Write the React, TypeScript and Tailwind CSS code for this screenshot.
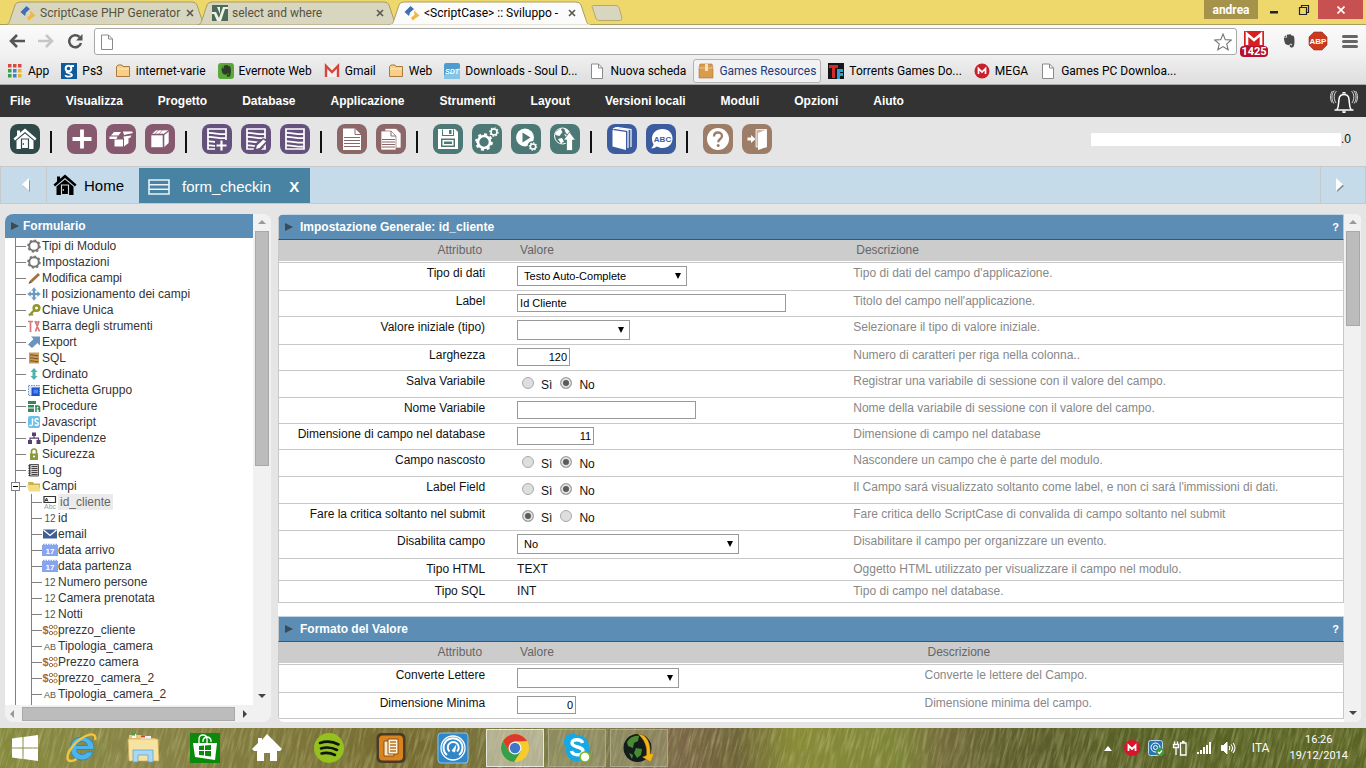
import React, { useState } from "react";
import type { ReactNode } from "react";

const chromeFont = "font-['Roboto','Open_Sans',sans-serif]";
const appFont = "font-['Liberation_Sans',Arial,sans-serif]";

/* ---------- small shared drawings ---------- */

function ScriptCaseMark() {
  return (
    <svg viewBox="0 0 16 16" className="size-4 shrink-0" aria-hidden="true">
      <path d="M6.500 1 10 4 6 7.500 5 11 .5 7Z" fill="#3c6fb4" />
      <path d="M10 5.500 15.500 10.500 8.500 15.500 7 12.500 10.500 10Z" fill="#f4b73c" />
    </svg>
  );
}

function SelectMark() {
  return (
    <svg viewBox="0 0 16 16" className="size-4 shrink-0" aria-hidden="true">
      <path d="M0 0h16v16H0z" fill="#4c6b5c" />
      <path d="M0 7h4l3 6 4-11h5v2h-3L9 16H5L2 9H0zM5 2h3v7z" fill="#f1f1e0" />
    </svg>
  );
}

function PageIcon() {
  return (
    <svg viewBox="0 0 16 16" className="size-4 shrink-0" aria-hidden="true">
      <path d="M2.500 1h7l4 4v10.500h-11z" fill="#fff" stroke="#8a8a8a" />
      <path d="M9.500 1v4h4" fill="none" stroke="#8a8a8a" />
    </svg>
  );
}

function FolderIcon() {
  return (
    <svg viewBox="0 0 16 16" className="size-4 shrink-0" aria-hidden="true">
      <path d="M1.500 3.500 3 2h4l1 1.500h6.500v10h-13z" fill="#f9cf87" stroke="#a87a3c" />
      <path d="M2 6h12" stroke="#fde8bd" />
    </svg>
  );
}

function Elephant({ color }: { color: string }) {
  return (
    <path
      d="M6 2.500 9.500 2l.8 1.100 2 .5c.9 3.200.8 7.500-.2 9.300-.7 1.300-3.100 1.300-3.400-.2-.2-1 .5-1.700 1.500-1.500v1.100c.8-.2.9-1.700-.3-1.800-1-.1-1.500.5-1.600 1.200-2-.1-3.600-.6-4-2.200C3.800 8 3.500 6.400 3.400 5.200H6zM5.300 2.800 3.500 4.600h1.800z"
      fill={color}
    />
  );
}

/* ---------- browser ---------- */

function TabShape({ active }: { active?: boolean }) {
  return (
    <svg viewBox="0 0 202 24" preserveAspectRatio="none" className="absolute inset-0 size-full" aria-hidden="true">
      <path
        d="M0 24C5 23 4 21 6 16L10 4Q11 1 15 1H187Q191 1 192 4L196 16C198 21 197 23 202 24Z"
        fill={active ? "#fbfbfb" : "#d9d6c0"}
        stroke="#a99d62"
        strokeWidth="1"
      />
      {active && <path d="M1 23.500h200v1H1z" fill="#fbfbfb" />}
    </svg>
  );
}

function BrowserTab({ icon, title, active }: { icon: ReactNode; title: string; active?: boolean }) {
  return (
    <div className={active ? "relative z-10 h-6 w-[202px] -mr-2.5" : "relative h-6 w-[202px] -mr-2.5"}>
      <TabShape active={active} />
      <div className="relative flex h-full items-center gap-1 pl-[15px] pr-3">
        {icon}
        <span className={active ? "whitespace-nowrap text-[12px] text-black" : "whitespace-nowrap text-[12px] text-[#55533f]"}>
          {title}
        </span>
        <button aria-label={"Chiudi " + title} className="ml-auto flex size-3.5 items-center justify-center">
          <svg viewBox="0 0 8 8" className="size-2" aria-hidden="true">
            <path d="m1 1 6 6M7 1 1 7" stroke="#5a5a50" strokeWidth="1.700" />
          </svg>
        </button>
      </div>
    </div>
  );
}

function TabStrip() {
  return (
    <header className="flex h-[25px] shrink-0 items-start border-b border-[#a99d62] bg-[#efd86b] pl-[5px]">
      <div className="flex pt-px">
        <BrowserTab icon={<ScriptCaseMark />} title="ScriptCase PHP Generator" />
        <BrowserTab icon={<SelectMark />} title="select and where" />
        <BrowserTab icon={<ScriptCaseMark />} title="<ScriptCase> :: Sviluppo -" active />
        <button aria-label="Nuova scheda" className="ml-2.5 mt-1 h-4 w-8">
          <svg viewBox="0 0 32 16" className="h-4 w-8" aria-hidden="true">
            <path d="M1 1.500Q1 .5 3 .5H25Q27 .5 28 2.500L31 13Q31 15.500 29 15.500H8Q6 15.500 5 13.500Z" fill="#d9d6c0" stroke="#b3a86e" />
          </svg>
        </button>
      </div>
      <div className="ml-auto flex items-start pr-[3px]">
        <button className="h-[19px] w-[54px] bg-[#a5934b] text-[12px] font-bold leading-[18px] text-white">andrea</button>
        <button aria-label="Riduci" className="flex h-[19px] w-8 items-center justify-center">
          <svg viewBox="0 0 10 10" className="size-2.5" aria-hidden="true"><path d="M1 6h8v2.500H1z" fill="#222" /></svg>
        </button>
        <button aria-label="Ripristina" className="flex h-[19px] w-7 items-center justify-center">
          <svg viewBox="0 0 12 12" className="size-3" aria-hidden="true">
            <path d="M1.500 3.500h7v7h-7zM3.500 3V1.500h7v7H9" fill="none" stroke="#222" strokeWidth="1.200" />
          </svg>
        </button>
        <button aria-label="Chiudi" className="flex h-[19px] w-[45px] items-center justify-center bg-[#c75050]">
          <svg viewBox="0 0 8 8" className="size-2" aria-hidden="true"><path d="m.5.5 7 7m0-7-7 7" stroke="#fff" strokeWidth="1.600" /></svg>
        </button>
      </div>
    </header>
  );
}

function AddressBar() {
  return (
    <div className="flex h-8 shrink-0 items-center bg-linear-to-b from-[#fbfbfb] to-[#f0f0f0] pl-2 pr-2">
      <button aria-label="Indietro" className="flex w-[29px] justify-start">
        <svg viewBox="0 0 18 16" className="h-4 w-[18px]" aria-hidden="true"><path d="M9 2 3 8l6 6M3 8h14" fill="none" stroke="#555" strokeWidth="2.600" /></svg>
      </button>
      <button aria-label="Avanti" className="flex w-[29px] justify-start">
        <svg viewBox="0 0 18 16" className="h-4 w-[18px]" aria-hidden="true"><path d="m9 2 6 6-6 6M15 8H1" fill="none" stroke="#c6c6c6" strokeWidth="2.600" /></svg>
      </button>
      <button aria-label="Ricarica" className="flex w-7 justify-start">
        <svg viewBox="0 0 18 16" className="h-4 w-[18px]" aria-hidden="true">
          <path d="M13.500 4A6 6 0 1 0 15 10" fill="none" stroke="#555" strokeWidth="2.500" />
          <path d="M16.500 1v6.500H10z" fill="#555" />
        </svg>
      </button>
      <div className="mt-px flex h-[27px] flex-1 items-center rounded-[3px] border border-[#a8a8a8] bg-white px-1">
        <PageIcon />
        <input aria-label="Indirizzo" className="h-5 min-w-0 flex-1 bg-transparent px-2 text-[13px] outline-none" defaultValue="" />
        <button aria-label="Preferiti">
          <svg viewBox="0 0 18 18" className="size-[18px]" aria-hidden="true">
            <path d="m9 1 2.300 5.600 6 .4-4.600 3.900 1.500 5.900L9 13.600l-5.200 3.200 1.500-5.900L.7 7l6-.4z" fill="#fff" stroke="#777" strokeWidth="1.100" />
          </svg>
        </button>
      </div>
      <button aria-label="Gmail, 1425 messaggi" className="relative ml-[3px] flex h-7 w-7 justify-center">
        <svg viewBox="0 0 20 16" className="mt-1 h-4 w-5" aria-hidden="true">
          <path d="M0 0h20v16H0z" fill="#d81e1e" />
          <path d="M3 14V3l7 6 7-6v11" fill="none" stroke="#fff" strokeWidth="2.600" />
        </svg>
        <span className="absolute bottom-[-2px] left-0 w-7 rounded-sm bg-[#b5102d] text-center text-[11px] font-bold leading-[11px] text-white">1425</span>
      </button>
      <button aria-label="Evernote" className="ml-3 w-4">
        <svg viewBox="0 0 16 16" className="size-[18px]" aria-hidden="true"><Elephant color="#4b4b4b" /></svg>
      </button>
      <button aria-label="Adblock Plus" className="ml-3 flex size-[20px] items-center justify-center">
        <svg viewBox="0 0 20 20" className="size-5" aria-hidden="true">
          <path d="M6 1h8l5 5v8l-5 5H6l-5-5V6z" fill="#c93a1f" stroke="#8e2b1a" strokeWidth=".6" />
          <text x="10" y="13" fontSize="8" fontWeight="700" textAnchor="middle" fill="#fff" fontFamily="Liberation Sans">ABP</text>
        </svg>
      </button>
      <button aria-label="Menu" className="ml-3.5 flex h-4 w-4 flex-col justify-center gap-0.5">
        <span className="h-[3px] w-full rounded-sm bg-[#666]" />
        <span className="h-[3px] w-full rounded-sm bg-[#666]" />
        <span className="h-[3px] w-full rounded-sm bg-[#666]" />
      </button>
    </div>
  );
}

const appDots = ["#d8483e", "#d8483e", "#d8483e", "#3f9a52", "#4180d0", "#e8b42c", "#3f9a52", "#4180d0", "#e8b42c"];

const bookmarks: { label: string; icon: ReactNode; hot?: boolean }[] = [
  {
    label: "App",
    icon: (
      <svg viewBox="0 0 16 16" className="size-4 shrink-0" aria-hidden="true">
        {appDots.map((c, i) => (
          <rect key={i} x={1 + (i % 3) * 5} y={1 + Math.floor(i / 3) * 5} width="3.500" height="3.500" fill={c} />
        ))}
      </svg>
    ),
  },
  {
    label: "Ps3",
    icon: (
      <svg viewBox="0 0 16 16" className="size-4 shrink-0" aria-hidden="true">
        <path d="M0 0h16v16H0z" fill="#0d5c9e" />
        <circle cx="7.500" cy="5.500" r="2.800" fill="none" stroke="#fff" strokeWidth="2" />
        <path d="M10 3h3M6 8.500c-2 1.500 5 1.500 5 3.500S4.500 14.500 4.500 12" fill="none" stroke="#fff" strokeWidth="1.800" />
      </svg>
    ),
  },
  { label: "internet-varie", icon: <FolderIcon /> },
  {
    label: "Evernote Web",
    icon: (
      <svg viewBox="0 0 16 16" className="size-4 shrink-0" aria-hidden="true">
        <rect width="16" height="16" rx="3" fill="#5aa83a" />
        <Elephant color="#2d3b28" />
      </svg>
    ),
  },
  {
    label: "Gmail",
    icon: (
      <svg viewBox="0 0 16 16" className="size-4 shrink-0" aria-hidden="true">
        <path d="M1 3h14v11H1z" fill="#f2f0ee" />
        <path d="M2 14V3l6 6 6-6v11" fill="none" stroke="#d5473c" strokeWidth="2.400" />
      </svg>
    ),
  },
  { label: "Web", icon: <FolderIcon /> },
  {
    label: "Downloads - Soul D...",
    icon: (
      <svg viewBox="0 0 16 16" className="size-4 shrink-0" aria-hidden="true">
        <rect width="16" height="16" rx="2" fill="#4d9bcf" />
        <path d="M0 12 16 5v11H0z" fill="#86c4e6" />
        <text x="8" y="11" fontSize="7" fontWeight="700" fontStyle="italic" textAnchor="middle" fill="#fff" fontFamily="Liberation Sans">SDT</text>
      </svg>
    ),
  },
  { label: "Nuova scheda", icon: <PageIcon /> },
  {
    label: "Games Resources",
    hot: true,
    icon: (
      <svg viewBox="0 0 16 16" className="size-4 shrink-0" aria-hidden="true">
        <path d="M2 1h12l1 4v10H1V5z" fill="#d99b4e" stroke="#a8743a" strokeWidth=".6" />
        <path d="M1 5h14" stroke="#f0c68a" />
        <path d="M7 1h3v7H7z" fill="#f6e2bd" />
      </svg>
    ),
  },
  {
    label: "Torrents Games Do...",
    icon: (
      <svg viewBox="0 0 16 16" className="size-4 shrink-0" aria-hidden="true">
        <path d="M0 0h16v16H0z" fill="#161616" />
        <path d="M1 2h9v3H7v10H4V5H1z" fill="#d62a2a" />
        <path d="M9 6h6v3h-3v1h3v3h-3v3H9z" fill="#2b9fd8" />
      </svg>
    ),
  },
  {
    label: "MEGA",
    icon: (
      <svg viewBox="0 0 16 16" className="size-4 shrink-0" aria-hidden="true">
        <circle cx="8" cy="8" r="7.500" fill="#c8202c" />
        <path d="M4.500 11V5.500L8 9l3.500-3.500V11" fill="none" stroke="#fff" strokeWidth="1.700" />
      </svg>
    ),
  },
  { label: "Games PC Downloa...", icon: <PageIcon /> },
];

function BookmarksBar() {
  return (
    <nav aria-label="Preferiti" className="flex h-7 shrink-0 items-center gap-0.5 border-b border-[#a9a9a9] bg-linear-to-b from-[#efefef] to-[#dedede] pl-0.5">
      {bookmarks.map((b) => (
        <a
          key={b.label}
          href="#"
          className={
            b.hot
              ? "flex h-6 items-center gap-[5px] whitespace-nowrap rounded-[3px] border border-[#b3b3b3] bg-[#f2f2f2] px-1 text-[12px] text-[#223a7a]"
              : "flex h-6 items-center gap-[5px] whitespace-nowrap border border-transparent px-1 text-[12px] text-black"
          }
        >
          {b.icon}
          {b.label}
        </a>
      ))}
    </nav>
  );
}

/* ---------- application header ---------- */

const menu = ["File", "Visualizza", "Progetto", "Database", "Applicazione", "Strumenti", "Layout", "Versioni locali", "Moduli", "Opzioni", "Aiuto"];

function MenuBar() {
  return (
    <nav aria-label="Menu principale" className="flex h-8 shrink-0 items-center gap-[35px] bg-[#333] pl-2.5 pr-2">
      {menu.map((m) => (
        <button key={m} className="whitespace-nowrap text-[12px] font-bold text-white">{m}</button>
      ))}
      <button aria-label="Notifiche" className="ml-auto">
        <svg viewBox="0 0 28 26" className="h-[26px] w-7" fill="none" stroke="#fff" aria-hidden="true">
          <path d="M4.500 22h19M7 21.500C9.500 18 8 13 9.500 9 11 5.500 17 5.500 18.500 9c1.500 4 0 9 2.500 12.500" strokeWidth="1.500" />
          <path d="M13 6V4.500h2V6M13 23h2v1.500h-2z" strokeWidth="1.100" />
          <path d="M6.500 3C3.500 6 3.500 11 6 15M4.300 2.500C1 6.500 1.500 11.500 3.800 15.500M2.300 3C-.2 7 .2 11 1.800 14.500M21.500 3c3 3 3 8 .5 12M23.700 2.500c3.300 4 2.800 9 .5 13M25.700 3c2.500 4 2.100 8 .5 11.500" strokeWidth=".8" />
        </svg>
      </button>
    </nav>
  );
}

const w = { fill: "none", stroke: "#fff" };

function Gear({ x, y, r, sw }: { x: number; y: number; r: number; sw: number }) {
  return (
    <g>
      <circle cx={x} cy={y} r={r} fill="none" stroke="#fff" strokeWidth={sw} />
      <circle cx={x} cy={y} r={r + sw * 0.7} fill="none" stroke="#fff" strokeWidth={sw * 0.8} pathLength={16} strokeDasharray="1 1" />
    </g>
  );
}

const house = (
  <>
    <path d="M15 4.500 26.500 14.500 25 16.500 15 8 5 16.500 3.500 14.500 7 11.400V6.500h3v2.300z" fill="currentColor" />
    <path d="M15 9.500 23.500 16.500V25h-17V16.500z" fill="currentColor" />
    <path d="M11.500 24.500V15h7v9.500z" className="fill-none stroke-(--door)" strokeWidth="1.200" />
    <path d="M13.300 19v2" className="fill-none stroke-(--door)" strokeWidth="1" />
  </>
);

const db = (
  <path d="M6 5h18v20H6zM6 9c6-.5 12 2 18 1M6 13c6-.5 12 2 18 1M6 17.500c6-.5 12 2 18 1M6 21.500c6-.5 12 2 18 1" {...w} strokeWidth="1.700" />
);

const tools: { name: string; bg: string; art: ReactNode }[][] = [
  [{ name: "Home", bg: "bg-[#2f4a48] text-white [--door:#2f4a48]", art: house }],
  [
    { name: "Nuovo", bg: "bg-[#87596f]", art: <path d="M15 5.500v19M5.500 15h19" {...w} strokeWidth="3.800" /> },
    {
      name: "Apri progetto",
      bg: "bg-[#87596f]",
      art: (
        <g fill="#fff">
          <path d="M8.500 15.500h8.500v7H8.500zM18 15.500l4.500-2.500v6L18 22.500zM8 8h7l-2.500 3.500H5zM17 7.500h9l1 1.500-9 2zM3.500 12.500h8l-1 2.500h-7zM17.500 12.500l8-1-1.500 2.500-6 1z" />
        </g>
      ),
    },
    { name: "Chiudi progetto", bg: "bg-[#87596f]", art: <path d="M6 11h12v12.500H6zM6.500 10 11 6h13l-5 4zM19 11l5-4v12l-5 4.500zM14 5.500l-4.500 5M18 5.500l-4.500 5" fill="#fff" stroke="#87596f" strokeWidth=".6" /> },
  ],
  [
    { name: "Nuova tabella", bg: "bg-[#65527c]", art: <>{db}<path d="M13 16h12v11H13z" fill="#65527c" /><path d="M19.500 16.500v10M14.500 21.500h10" {...w} strokeWidth="2.200" /></> },
    { name: "Modifica tabella", bg: "bg-[#65527c]", art: <>{db}<path d="m12 27 3-8 7-5 6 2-8 10z" fill="#65527c" /><path d="m16 21.500 6.500-6 2.500 2-6.500 6.500-3.500 1z" fill="#fff" /></> },
    { name: "Tabelle", bg: "bg-[#65527c]", art: db },
  ],
  [
    { name: "Documento", bg: "bg-[#8c6768]", art: <><path d="M6 4.500h12l6 6V26H6z" fill="#fff" /><path d="M18 4.500v6h6M7 13.500h16M7 16.500h16M7 19.500h16M7 22.500h16" fill="none" stroke="#8c6768" /></> },
    { name: "Copia documento", bg: "bg-[#8c6768]", art: <><path d="M9 4.500h11l5 5V24H9z" fill="#fff" stroke="#8c6768" strokeWidth=".7" /><path d="M5 7h10l5 5v14H5z" fill="#fff" stroke="#8c6768" strokeWidth=".7" /><path d="M15 7v5h5M6 15.500h13M6 18h13M6 20.500h13M6 23h13" fill="none" stroke="#8c6768" /></> },
  ],
  [
    { name: "Salva", bg: "bg-[#4c7875]", art: <><path d="M5 5h17l3 3v17H5z" fill="#fff" /><path d="M9 5.500h12V12H9zM8 14.500h14V23H8z" fill="#4c7875" /><path d="M10 5h10v6H10z" fill="#fff" /><path d="M16 6h2.500v4H16z" fill="#4c7875" /><path d="M9.500 16h11v5.500h-11z" fill="#fff" /><path d="M11 17.500h8v2.500h-8z" fill="#4c7875" /></> },
    { name: "Genera", bg: "bg-[#4c7875]", art: <><Gear x={12} y={18} r={6} sw={2.600} /><Gear x={22} y={8} r={3} sw={1.600} /></> },
    { name: "Esegui", bg: "bg-[#4c7875]", art: <><circle cx="14" cy="13.500" r="9" fill="#fff" /><path d="m11.500 8.500 8 5-8 5z" fill="#4c7875" /><circle cx="22" cy="22.500" r="5.500" fill="#4c7875" /><Gear x={22} y={22.5} r={2.600} sw={1.500} /></> },
    { name: "Pubblica", bg: "bg-[#4c7875]", art: <><circle cx="12.500" cy="12" r="8" {...w} strokeWidth="1" /><path d="M5.500 8.500l5-4 2 3.500-3 4-4-1zM14 4l4.500 2.500 1.500 4-4-1zM8 15l4-1 2 3.500-3 2zM14 10l3 1-1 2z" fill="#fff" /><path d="m19.500 8 6 8h-3v10.500h-6V16h-3z" fill="#fff" stroke="#4c7875" strokeWidth=".8" /></> },
  ],
  [
    { name: "Manuale", bg: "bg-[#3d5c9f]", art: <><path d="M5.500 6 19 8v18L5.500 22.500z" fill="#fff" /><path d="M6 5l3-1.500 13 2M8 4.500l13 2V24M10.500 3.500l13.500 2V23" {...w} strokeWidth="1.200" /></> },
    { name: "Traduzione", bg: "bg-[#3d5c9f]", art: <><path d="M16.500 5c6 0 10 4 10 9.500s-4 9.500-10 9.500c-2.500 0-4-.7-5.500-1.500-2 1-3.500 2-6 2 1.500-1.500 2.500-3 2.500-4.500-1-1.500-1.500-3-1.500-5.500C6 9 10.500 5 16.500 5z" fill="#fff" /><text x="16.500" y="17.500" fontSize="8" fontWeight="700" textAnchor="middle" fill="#3d5c9f" fontFamily="Liberation Sans">ABC</text></> },
  ],
  [
    { name: "Aiuto", bg: "bg-[#9d7d67]", art: <><circle cx="15" cy="15" r="11" fill="#fff" /><path d="M11 12.500C11 7 19 7.500 19 12c0 3-3.800 3-3.800 6.200" fill="none" stroke="#9d7d67" strokeWidth="2.300" /><circle cx="15.200" cy="21.500" r="1.500" fill="#9d7d67" /></> },
    { name: "Esci", bg: "bg-[#9d7d67]", art: <><path d="M14 5.500h10.500V23H14z" fill="#c9b5a5" stroke="#fff" strokeWidth=".8" /><path d="m24.500 5.500 0 17.500L16 26V9z" fill="#fff" /><path d="M5.500 13.500v3H9V19l4.500-4L9 11v2.500z" fill="#fff" /></> },
  ],
];

function Toolbar() {
  return (
    <div className="flex h-[49px] shrink-0 items-start bg-[#e5e5e5] pl-2.5 pr-[15px] pt-[7px]">
      {tools.map((group, gi) => (
        <div key={gi} className="flex">
          <div className="flex gap-[9px]">
            {group.map((t) => (
              <button key={t.name} aria-label={t.name} className={`size-[30px] rounded-[8px] ${t.bg}`}>
                <svg viewBox="0 0 30 30" className="size-[30px]" aria-hidden="true">{t.art}</svg>
              </button>
            ))}
          </div>
          {gi < tools.length - 1 && <span className="ml-2.5 mr-[15px] mt-[7px] h-[22px] w-0.5 bg-[#111]" />}
        </div>
      ))}
      <div className="ml-auto mt-[9px] flex items-center">
        <span className="h-[13px] w-[250px] bg-white" />
        <span className="text-[12px] leading-[13px] text-[#111]">.0</span>
      </div>
    </div>
  );
}

function AppTabs() {
  return (
    <div className="flex h-[38px] shrink-0 border-y border-[#c6cacd] bg-[#c5dbea]">
      <button aria-label="Scheda precedente" className="flex w-[47px] items-center justify-center border-x border-[#c6cacd] pl-1">
        <svg viewBox="0 0 10 14" className="h-3.5 w-2.5" aria-hidden="true">
          <path d="M9 2v12L2 8z" fill="#8a9aa5" />
          <path d="M8 0v13L1 6.500z" fill="#fff" />
        </svg>
      </button>
      <button className="flex w-[91px] items-center gap-[7px] pl-1.5 pt-[3px] text-[15px] text-black">
        <svg viewBox="3 4 24 22" className="mb-1 h-6 w-6 text-black [--door:#c5dbea]" aria-hidden="true">{house}</svg>
        Home
      </button>
      <button className="ml-px mt-px flex w-[171px] items-center bg-[#4883a3] pl-[9px] pt-[3px] text-[15px] text-white">
        <svg viewBox="0 0 22 16" className="mr-3 h-4 w-[22px]" fill="none" stroke="#e8f2f8" strokeWidth="1.600" aria-hidden="true">
          <path d="M1 1h20v14H1zM1 5.700h20M1 10.300h20" />
        </svg>
        form_checkin
        <span className="ml-[18px] font-bold">X</span>
      </button>
      <button aria-label="Scheda successiva" className="ml-auto flex w-[46px] items-center justify-center border-x border-[#c6cacd] pr-1.5">
        <svg viewBox="0 0 10 14" className="h-3.5 w-2.5" aria-hidden="true">
          <path d="M2 2v12l7-6z" fill="#7f8f9a" />
          <path d="M1 0v13l7-6.500z" fill="#fff" />
        </svg>
      </button>
    </div>
  );
}

/* ---------- tree ---------- */

const gearArt = (
  <g fill="none" stroke="#777">
    <circle cx="7" cy="7" r="4.800" strokeWidth="2" />
    <circle cx="7" cy="7" r="6" strokeWidth="1.600" pathLength={16} strokeDasharray="1 1" />
  </g>
);

const treeItems: { label: string; art: ReactNode }[] = [
  { label: "Tipi di Modulo", art: gearArt },
  { label: "Impostazioni", art: gearArt },
  { label: "Modifica campi", art: <><path d="M3 9.500 11 2l2 2-8 7.500z" fill="#a9713a" /><path d="m3 9.500 2 2L1.500 13z" fill="#6a4a2c" /></> },
  { label: "Il posizionamento dei campi", art: <path d="m7 .5 2.500 3H8V6h2.500V4.500l3 2.500-3 2.500V8H8v2.500h1.500L7 13.500l-2.500-3H6V8H3.500v1.500L.5 7l3-2.500V6H6V3.500H4.500z" fill="#6b9ac4" stroke="#6b9ac4" strokeWidth=".3" /> },
  { label: "Chiave Unica", art: <><circle cx="9.500" cy="5" r="2.800" fill="none" stroke="#8e962c" strokeWidth="2.600" /><path d="m7.500 7-5.500 5.500M4 10.500l1.800 1.800" stroke="#8e962c" strokeWidth="2.200" /></> },
  { label: "Barra degli strumenti", art: <path d="M1 2.500h5M3.500 2.500V13M8 2l4.500 10.500M12 2 8.500 12.500M9 3h2" fill="none" stroke="#d9787a" strokeWidth="1.700" /> },
  { label: "Export", art: <path d="M4 1.500h9v9l-2.500-2.500L5 13 1 9.500l5.500-5.500z" fill="#6b93bb" /> },
  { label: "SQL", art: <><path d="M2 1.500h10v11H2z" fill="#c99a58" /><path d="M3 4c3-1 5 1.500 8 .5M3 7c3-1 5 1.500 8 .5M3 10c3-1 5 1.500 8 .5" fill="none" stroke="#7f5a26" strokeWidth="1.200" /></> },
  { label: "Ordinato", art: <path d="m7 1 3.500 4H8.500v4h2L7 13 3.500 9h2V5h-2z" fill="#4bb5ad" /> },
  { label: "Etichetta Gruppo", art: <><path d="M1.500 2.500h11v10h-11z" fill="#dbe8fb" stroke="#6f93c8" strokeDasharray="1.500 1" /><path d="M4.500 4.500h8V13h-8z" fill="#1f50d0" /><path d="M6.500 6.500H11v4H6.500z" fill="#4f86f0" /></> },
  { label: "Procedure", art: <><path d="M1 2h8v3H1zM1 6h6v2.500H1zM1 9.500h6V13H1z" fill="#37865a" /><path d="M8 7h2.500c2.500 0 2.500 3 0 3M9 13V7M12.500 8v5" fill="none" stroke="#37865a" strokeWidth="1.600" /></> },
  { label: "Javascript", art: <><rect x="1" y="1" width="12" height="12" rx="2" fill="#6cbfe8" /><path d="M5.500 3.500V9c0 2-2.500 2-3 .8M11.500 4.500c-1-1.200-3.500-1-3.500 1s3.500 1.300 3.500 3.200-2.800 2-3.700.7" fill="none" stroke="#fff" strokeWidth="1.400" /></> },
  { label: "Dipendenze", art: <><path d="M5 1.500h4V5H5zM1 9h4v4H1zM9.500 9h4v4h-4z" fill="#56406e" /><path d="M7 5v2.200M3 9V7.200h8.500V9" fill="none" stroke="#56406e" strokeWidth="1.200" /></> },
  { label: "Sicurezza", art: <><path d="M3 6.500h8V13H3z" fill="#8b9a3a" /><path d="M4.500 7V4.500a2.500 2.500 0 0 1 5 0V7" fill="none" stroke="#8b9a3a" strokeWidth="1.600" /><circle cx="7" cy="9.500" r="1" fill="#fff" /></> },
  { label: "Log", art: <><path d="M2.500 1.500h9v11.500h-9z" fill="#d0d0d0" stroke="#555" /><path d="M4.500 3.500h6M4.500 5.500h6M4.500 7.500h6M4.500 9.500h6M4.500 11.500h6" stroke="#444" /><path d="M2.500 2v11" stroke="#333" strokeWidth="2" strokeDasharray="1.500 1" /></> },
];

type FieldKind = "auto" | "num" | "mail" | "date" | "money" | "text";

const fields: { label: string; kind: FieldKind }[] = [
  { label: "id_cliente", kind: "auto" },
  { label: "id", kind: "num" },
  { label: "email", kind: "mail" },
  { label: "data arrivo", kind: "date" },
  { label: "data partenza", kind: "date" },
  { label: "Numero persone", kind: "num" },
  { label: "Camera prenotata", kind: "num" },
  { label: "Notti", kind: "num" },
  { label: "prezzo_cliente", kind: "money" },
  { label: "Tipologia_camera", kind: "text" },
  { label: "Prezzo camera", kind: "money" },
  { label: "prezzo_camera_2", kind: "money" },
  { label: "Tipologia_camera_2", kind: "text" },
];

const glyph = { fontFamily: "Liberation Sans", textAnchor: "middle" as const };

const fieldArt: Record<FieldKind, ReactNode> = {
  auto: (
    <>
      <path d="M2 1.500h11.500v6H2z" fill="#fff" stroke="#333" strokeWidth="1.200" />
      <path d="M3 6.500 4.500 3 6 6.500M3.500 5.500h2" fill="none" stroke="#333" />
      <text x="8" y="13.500" fontSize="7" fill="#999" {...glyph}>Abc</text>
    </>
  ),
  num: <text x="8" y="11" fontSize="10" fill="#555" {...glyph}>12</text>,
  mail: <><path d="M1 2.500h14v9H1z" fill="#3f5e92" /><path d="m1.500 3 6.500 5.500L14.500 3" fill="none" stroke="#fff" strokeWidth="1.300" /></>,
  date: (
    <>
      <path d="M0 2h16v11H0z" fill="#85a6ee" />
      <path d="M1 1.500h14" stroke="#85a6ee" strokeWidth="1.500" strokeDasharray="1.500 1" />
      <text x="8" y="11" fontSize="8" fontWeight="700" fill="#fff" {...glyph}>17</text>
    </>
  ),
  money: (
    <>
      <text x="3.500" y="11" fontSize="11" fontWeight="700" fill="#b06a1e" {...glyph}>$</text>
      <g fill="none" stroke="#a5713f">
        <circle cx="9" cy="4" r="1.700" /><circle cx="13.500" cy="4" r="1.700" />
        <circle cx="9" cy="10" r="1.700" /><circle cx="13.500" cy="10" r="1.700" />
      </g>
    </>
  ),
  text: <text x="8" y="11" fontSize="9" fill="#555" {...glyph}>AB</text>,
};

function Arrow({ dir, dark }: { dir: "up" | "down" | "left" | "right"; dark?: boolean }) {
  const d = { up: "M1 6h8L5 2z", down: "M1 3h8L5 7z", left: "M6 1v8L2 5z", right: "M4 1v8l4-4z" }[dir];
  return (
    <svg viewBox="0 0 10 10" className="size-2.5 shrink-0" aria-hidden="true">
      <path d={d} fill={dark ? "#444" : "#999"} />
    </svg>
  );
}

function VScroll({ thumb }: { thumb: string }) {
  return (
    <div className="flex w-[17px] shrink-0 flex-col items-center bg-[#f1f1f1] pb-1 pt-1">
      <Arrow dir="up" />
      <span className={`mt-[3px] w-3.5 border border-[#a8a8a8] bg-[#bcbcbc] ${thumb}`} />
      <span className="mt-auto"><Arrow dir="down" dark /></span>
    </div>
  );
}

function TreePanel() {
  return (
    <aside className="flex w-[266px] shrink-0 flex-col overflow-hidden rounded-[8px] bg-[#f1f1f1]">
      <div className="flex min-h-0 flex-1">
        <div className="flex min-w-0 flex-1 flex-col overflow-hidden bg-white">
          <h2 className="flex h-6 shrink-0 items-center gap-[3px] bg-[#5b8db5] pl-[5px] text-[12px] font-bold text-white">
            <svg viewBox="0 0 10 10" className="size-2.5" aria-hidden="true"><path d="M1 1v8l8-4z" fill="#3d4a52" /></svg>
            Formulario
          </h2>
          <ul className="ml-2.5 flex-1 border-l border-[#808080]">
            {treeItems.map((t) => (
              <li key={t.label} className="flex h-4 items-center">
                <span className="h-px w-2.5 bg-[#808080]" />
                <a href="#" className="ml-px flex items-center gap-px text-[12px] leading-4 text-[#333]">
                  <svg viewBox="0 0 14 14" className="size-3.5" aria-hidden="true">{t.art}</svg>
                  {t.label}
                </a>
              </li>
            ))}
            <li className="relative">
              <button aria-label="Comprimi Campi" className="absolute -left-[5px] top-1 size-[9px] border border-[#808080] bg-white">
                <span className="absolute left-px top-[3px] h-px w-[5px] bg-black" />
              </button>
              <div className="flex h-4 items-center">
                <span className="ml-1 h-px w-1.5 bg-[#808080]" />
                <a href="#" className="ml-px flex items-center gap-px text-[12px] leading-4 text-[#333]">
                  <svg viewBox="0 0 14 14" className="size-3.5" aria-hidden="true">
                    <path d="M1 3h5l1 1.500h6V12H2z" fill="#cdb04a" />
                    <path d="M0 6h12l1.500 6.500H2z" fill="#f2dc84" />
                  </svg>
                  Campi
                </a>
              </div>
              <ul className="ml-[15px] border-l border-[#808080] pb-1">
                {fields.map((f, i) => (
                  <li key={f.label} className="flex h-4 items-center">
                    <span className="h-px w-2.5 bg-[#808080]" />
                    <a href="#" className="flex items-center whitespace-nowrap text-[12px] leading-4 text-[#333]">
                      <svg viewBox="0 0 16 14" className="h-3.5 w-4" aria-hidden="true">{fieldArt[f.kind]}</svg>
                      <span className={i === 0 ? "bg-[#ebebeb] px-0.5 text-[#666]" : ""}>{f.label}</span>
                    </a>
                  </li>
                ))}
              </ul>
            </li>
          </ul>
        </div>
        <div className="flex w-[18px] justify-center">
          <VScroll thumb="h-[235px]" />
        </div>
      </div>
      <div className="flex h-[17px] shrink-0 items-center pl-[3px] pr-[22px]">
        <Arrow dir="left" />
        <span className="ml-1 h-3.5 flex-1 border border-[#a8a8a8] bg-[#bcbcbc]" />
        <span className="ml-1 flex"><Arrow dir="right" dark /></span>
      </div>
    </aside>
  );
}

/* ---------- form ---------- */

type Control =
  | { type: "select"; value: string; width: string }
  | { type: "input"; value: string; width: string; right?: boolean }
  | { type: "radio"; value: "Sì" | "No" }
  | { type: "plain"; value: string };

type Row = { id: string; label: string; control: Control; desc: string };

const general: Row[] = [
  { id: "tipo", label: "Tipo di dati", control: { type: "select", value: "Testo Auto-Complete", width: "w-[170px]" }, desc: "Tipo di dati del campo d'applicazione." },
  { id: "label", label: "Label", control: { type: "input", value: "Id Cliente", width: "w-[269px]" }, desc: "Titolo del campo nell'applicazione." },
  { id: "iniziale", label: "Valore iniziale (tipo)", control: { type: "select", value: "", width: "w-[113px]" }, desc: "Selezionare il tipo di valore iniziale." },
  { id: "larghezza", label: "Larghezza", control: { type: "input", value: "120", width: "w-[53px]", right: true }, desc: "Numero di caratteri per riga nella colonna.." },
  { id: "salva", label: "Salva Variabile", control: { type: "radio", value: "No" }, desc: "Registrar una variabile di sessione con il valore del campo." },
  { id: "nome", label: "Nome Variabile", control: { type: "input", value: "", width: "w-[179px]" }, desc: "Nome della variabile di sessione con il valore del campo." },
  { id: "dimensione", label: "Dimensione di campo nel database", control: { type: "input", value: "11", width: "w-[77px]", right: true }, desc: "Dimensione di campo nel database" },
  { id: "nascosto", label: "Campo nascosto", control: { type: "radio", value: "No" }, desc: "Nascondere un campo che è parte del modulo." },
  { id: "labelfield", label: "Label Field", control: { type: "radio", value: "No" }, desc: "Il Campo sará visualizzato soltanto come label, e non ci sará l'immissioni di dati." },
  { id: "critica", label: "Fare la critica soltanto nel submit", control: { type: "radio", value: "Sì" }, desc: "Fare critica dello ScriptCase di convalida di campo soltanto nel submit" },
  { id: "disabilita", label: "Disabilita campo", control: { type: "select", value: "No", width: "w-[222px]" }, desc: "Disabilitare il campo per organizzare un evento." },
  { id: "html", label: "Tipo HTML", control: { type: "plain", value: "TEXT" }, desc: "Oggetto HTML utilizzato per visualizzare il campo nel modulo." },
  { id: "sql", label: "Tipo SQL", control: { type: "plain", value: "INT" }, desc: "Tipo di campo nel database." },
];

const formato: Row[] = [
  { id: "converte", label: "Converte Lettere", control: { type: "select", value: "", width: "w-[162px]" }, desc: "Converte le lettere del Campo." },
  { id: "minima", label: "Dimensione Minima", control: { type: "input", value: "0", width: "w-[59px]", right: true }, desc: "Dimensione minima del campo." },
];

function Radios({ id, value }: { id: string; value: string }) {
  const [current, setCurrent] = useState(value);
  return (
    <div role="radiogroup" aria-labelledby={id + "-name"} className="flex h-[19px] items-start gap-2 pl-[5px] pt-[3px]">
      {["Sì", "No"].map((o) => (
        <label key={o} className="flex items-start gap-[7px] leading-4">
          <input
            type="radio"
            name={id}
            checked={current === o}
            onChange={() => setCurrent(o)}
            className="size-3 appearance-none rounded-full border border-[#a9a9a9] bg-[#dedede] checked:bg-[#5a5a5a] checked:shadow-[inset_0_0_0_2px_#e2e2e2]"
          />
          {o}
        </label>
      ))}
    </div>
  );
}

function Field({ row }: { row: Row }) {
  const c = row.control;
  if (c.type === "select")
    return (
      <div className={`relative ${c.width}`}>
        <select id={row.id} defaultValue={c.value} className="block h-5 w-full appearance-none border border-[#999] bg-white pl-1.5 text-[11px] text-black">
          <option>{c.value}</option>
        </select>
        <svg viewBox="0 0 8 8" className="pointer-events-none absolute right-[5px] top-1.5 size-2" aria-hidden="true">
          <path d="M1 1h6L4 7z" fill="#000" />
        </svg>
      </div>
    );
  if (c.type === "input")
    return (
      <input
        id={row.id}
        defaultValue={c.value}
        className={`block h-[18px] border border-[#999] bg-white px-0.5 text-[11px] text-black ${c.width} ${c.right ? "text-right" : ""}`}
      />
    );
  if (c.type === "radio") return <Radios id={row.id} value={c.value} />;
  return <span className="block leading-[14px]">{c.value}</span>;
}

function Section({ title, rows, valueWidth }: { title: string; rows: Row[]; valueWidth: string }) {
  return (
    <section className="border-t border-[#c4d6e4]">
      <div className="flex h-[25px] items-center border-x border-b border-x-[#c8c8c8] border-b-[#3f5566] bg-[#5b8db5] pl-[5px] pr-1 text-white">
        <svg viewBox="0 0 10 10" className="mr-1.5 size-2.5" aria-hidden="true"><path d="M1 1v8l8-4z" fill="#3d4a52" /></svg>
        <h2 className="text-[12px] font-bold">{title}</h2>
        <button aria-label={"Aiuto: " + title} className="ml-auto text-[11px] font-bold">?</button>
      </div>
      <table className="w-full table-fixed border-separate border-spacing-0 border-x border-[#c8c8c8] text-[12px] leading-[14px]">
        <thead>
          <tr className="h-[22px] text-[#666] [&>th]:border-b [&>th]:border-white [&>th]:bg-[#ccc] [&>th]:pb-0.5 [&>th]:font-normal">
            <th className="w-[22%] pr-[31px] text-right">Attributo</th>
            <th className={`pl-[7px] text-left ${valueWidth}`}>Valore</th>
            <th className="pl-2 text-left">Descrizione</th>
          </tr>
        </thead>
        <tbody className="[&>tr:first-child>td]:border-t [&>tr>td]:border-[#c8c8c8] [&>tr>td]:border-b [&>tr>td]:pb-1 [&>tr>td]:pt-[3px] [&>tr>td]:align-top">
          {rows.map((r) => (
            <tr key={r.id}>
              <td className="whitespace-nowrap pr-7 text-right text-[#111]">
                {r.control.type === "radio" || r.control.type === "plain" ? (
                  <span id={r.id + "-name"}>{r.label}</span>
                ) : (
                  <label htmlFor={r.id}>{r.label}</label>
                )}
              </td>
              <td className="pl-1 text-[#111]"><Field row={r} /></td>
              <td className="pl-[5px] text-[#888]">{r.desc}</td>
            </tr>
          ))}
        </tbody>
      </table>
    </section>
  );
}

/* ---------- taskbar ---------- */

const launchers: { name: string; art: ReactNode }[] = [
  {
    name: "Internet Explorer",
    art: (
      <>
        <path d="M29 18.500H11.500c.3 3 2.500 5 5.500 5 2.200 0 4-1 4.800-2.500H28c-1.600 5-6 8-11 8C10.500 29 5.500 24.200 5.500 17.500S10.500 6 17 6c7.500 0 12.500 5 12 12.500zM22.500 14.500c-.5-2.500-2.500-4-5.300-4s-5 1.500-5.600 4z" fill="#4db4ec" stroke="#1d7cba" strokeWidth=".7" />
        <path d="M30 9c1.500-5-2-7-8-4.500C12 8.500 3 19 2.500 26c-.2 5 4 5 9 2" fill="none" stroke="#f2c53c" strokeWidth="2.400" />
      </>
    ),
  },
  {
    name: "Esplora file",
    art: (
      <>
        <path d="M2 4h12l2 3h12v22H2z" fill="#e8c979" />
        <path d="M5 3h4v4H5zM14 5h10v3H14z" fill="#f6f6f6" /><path d="M5 3h3v1.500H5z" fill="#3c9c4a" /><path d="M14 5h4v1.500h-4z" fill="#cf4434" />
        <path d="M1 8h30l1 22H2z" fill="#f7e3a1" stroke="#cfa851" strokeWidth=".7" />
        <path d="M6 31V19h20v12h-5v-7H11v7z" fill="#a9d8f2" stroke="#5fa4cf" strokeWidth=".8" />
      </>
    ),
  },
  {
    name: "Store",
    art: (
      <>
        <path d="M1 2h30v30H1z" fill="#0a8a0a" />
        <path d="M4 12h24l-2 17-20-3z" fill="#fff" />
        <path d="M10 12V8q0-4 4-4t4 4v4M14 11V9q1-3 4-3t4 3v2" fill="none" stroke="#fff" strokeWidth="1.300" />
        <path d="m10 15 5-.5V19h-5zM16 14.500l6-.5v5h-6zM10 20h5v4.500l-5-.5zM16 20h6v5.500l-6-.8z" fill="#0a8a0a" />
      </>
    ),
  },
  { name: "Home", art: <path d="M16 3 31 18l-2 2h-3v10h-7v-8h-6v8H6V20H3l-2-2 6-6V7h4v2z" fill="#fff" /> },
  {
    name: "Spotify",
    art: (
      <>
        <circle cx="16" cy="17" r="15" fill="#95c11f" />
        <path d="M7 12c6-2 13-1.500 18.500 1.500M8 17.500c5-1.500 11-1 16 1.500M8.500 22.500c5-1.200 9-.7 13.500 1.500" fill="none" stroke="#10160a" strokeWidth="2.600" strokeLinecap="round" />
      </>
    ),
  },
  {
    name: "Archivio",
    art: (
      <>
        <rect x="1.500" y="2" width="29" height="30" rx="5" fill="#4a3a2a" />
        <rect x="4" y="4.500" width="24" height="25" rx="4" fill="#d8831c" />
        <path d="M9 10h10v15H9z" fill="#fbe8c3" stroke="#8a5112" /><path d="M13 8h10v15H13z" fill="#fdf2da" stroke="#8a5112" />
        <path d="M15 11h6M15 14h6M15 17h6M15 20h6" stroke="#b8732a" strokeWidth="1.300" />
      </>
    ),
  },
  {
    name: "Monitor",
    art: (
      <>
        <rect x="1" y="2" width="30" height="30" rx="3" fill="#2f86c8" stroke="#8fc2e6" />
        <circle cx="16" cy="17" r="12" fill="none" stroke="#fff" strokeWidth="1.300" />
        <path d="M10 24a9.500 9.500 0 1 1 12 0M12.500 20.500a5.500 5.500 0 1 1 7.500 0" fill="none" stroke="#fff" strokeWidth="2" />
        <path d="m14.500 20 5-7-1.500 8.500z" fill="#fff" />
      </>
    ),
  },
];

const running: { name: string; active?: boolean; art: ReactNode }[] = [
  {
    name: "Chrome",
    active: true,
    art: (
      <>
        <circle cx="16" cy="17" r="14" fill="#f6cb2e" />
        <path d="M3.900 10A14 14 0 0 1 28.100 10L16 10.500 9.900 20.500z" fill="#dc3a2c" />
        <path d="M3.900 10A14 14 0 0 0 15 31l7-11L16 23 9.900 20.500z" fill="#35a04a" />
        <circle cx="16" cy="17" r="6.500" fill="#f4f4f4" /><circle cx="16" cy="17" r="5.200" fill="#3f78c9" />
      </>
    ),
  },
  {
    name: "Skype",
    art: (
      <>
        <path d="M9 3c3-1 5 0 7 1 8 0 13 6 12 14 3 6-2 13-9 12-9 2-15-5-14-13C1 12 3 5 9 3z" fill="#18a7e5" />
        <path d="M21.500 12c-1-4-10.500-4.500-10.500 0 0 5 11 3 11 8 0 5-10.500 5-11.500 0" fill="none" stroke="#fff" strokeWidth="3.400" />
        <circle cx="24" cy="26" r="5" fill="#fff" stroke="#7ab51d" strokeWidth="1.500" />
      </>
    ),
  },
  {
    name: "JDownloader",
    art: (
      <>
        <circle cx="14.500" cy="17" r="14" fill="#141d1b" />
        <path d="M4 11c3-5 8-7 12-6l-1 5-4 2-1 5-5-2zM13 17l6 1-1 6-4 3-3-5zM6 22l4 2-1 4z" fill="#4a8a35" />
        <path d="M15 3c9 0 13 10 12 20l4-.5-3.500 8.500-8-5 4-1.500c1-9-2-16-8.500-21.500z" fill="#f2b51c" stroke="#a87408" strokeWidth=".5" />
      </>
    ),
  },
];

function Meadow() {
  return (
    <svg className="absolute inset-0 size-full" preserveAspectRatio="none" viewBox="0 0 1366 40" aria-hidden="true">
      <defs>
        <linearGradient id="field" x1="0" x2="1" y1="0" y2="0">
          <stop offset="0" stopColor="#858a3c" /><stop offset=".1" stopColor="#8a8548" />
          <stop offset=".3" stopColor="#74692f" /><stop offset=".42" stopColor="#7c7a4a" />
          <stop offset=".5" stopColor="#7a6648" /><stop offset=".54" stopColor="#6d6238" />
          <stop offset=".58" stopColor="#8a8c36" /><stop offset=".66" stopColor="#7d8538" />
          <stop offset=".69" stopColor="#746a3c" /><stop offset=".74" stopColor="#5c5c2c" />
          <stop offset=".85" stopColor="#566125" /><stop offset="1" stopColor="#5a6424" />
        </linearGradient>
        <filter id="blades" x="0" y="0" width="100%" height="100%">
          <feTurbulence type="fractalNoise" baseFrequency="0.38 0.04" numOctaves="3" seed="7" />
          <feColorMatrix values="0 0 0 0 .72  0 0 0 0 .72  0 0 0 0 .38  1.600 0 0 0 -.7" />
        </filter>
        <filter id="shade" x="0" y="0" width="100%" height="100%">
          <feTurbulence type="fractalNoise" baseFrequency="0.3 0.05" numOctaves="3" seed="21" />
          <feColorMatrix values="0 0 0 0 .22  0 0 0 0 .22  0 0 0 0 .06  0 1.600 0 0 -.7" />
        </filter>
      </defs>
      <path d="M0 0h1366v40H0z" fill="url(#field)" />
      <g transform="skewX(-14)">
        <rect width="1400" height="40" filter="url(#blades)" opacity=".6" />
        <rect width="1400" height="40" filter="url(#shade)" opacity=".8" />
      </g>
    </svg>
  );
}

function Taskbar() {
  return (
    <footer className="relative h-10 shrink-0 overflow-hidden bg-[#6f6f35]">
      <Meadow />
      <div className="relative flex h-full items-center">
        <button aria-label="Start" className="flex w-[50px] justify-center">
          <svg viewBox="0 0 26 26" className="size-[26px]" fill="#fff" aria-hidden="true">
            <path d="m0 3.500 10.500-1.500v10.500H0zM11.500 1.900 26 0v12.500H11.500zM0 13.500h10.500V24L0 22.500zM11.500 13.500H26V26l-14.500-1.900z" />
          </svg>
        </button>
        {launchers.map((l) => (
          <button key={l.name} aria-label={l.name} className="flex w-[62px] justify-center">
            <svg viewBox="0 0 32 34" className="h-[34px] w-8" aria-hidden="true">{l.art}</svg>
          </button>
        ))}
        <div className="ml-0.5 flex gap-1">
          {running.map((r) => (
            <button
              key={r.name}
              aria-label={r.name}
              className={
                r.active
                  ? "flex h-[38px] w-[58px] items-center justify-center border border-[#e8e8da] bg-[#d8d8c899]"
                  : "flex h-[38px] w-[58px] items-center justify-center border border-[#a9a98a] bg-[#b0b09055]"
              }
            >
              <svg viewBox="0 0 32 34" className="h-[34px] w-8" aria-hidden="true">{r.art}</svg>
            </button>
          ))}
        </div>
        <div className="ml-auto flex items-center gap-2 pr-[18px] text-white">
          <svg viewBox="0 0 16 16" className="size-4" aria-hidden="true"><path d="M4 11h8L8 6z" fill="#fff" /></svg>
          <svg viewBox="0 0 16 16" className="size-4" aria-hidden="true">
            <circle cx="8" cy="8" r="8" fill="#d8152d" /><path d="M4.500 11V5.500L8 9l3.500-3.500V11" fill="none" stroke="#fff" strokeWidth="1.800" />
          </svg>
          <svg viewBox="0 0 16 16" className="size-4" aria-hidden="true">
            <rect x=".5" y=".5" width="14" height="15" rx="2" fill="#2777b8" stroke="#bcd8ee" />
            <circle cx="7.500" cy="7.500" r="4.500" fill="none" stroke="#fff" /><circle cx="7.500" cy="7.500" r="2" fill="none" stroke="#fff" />
            <circle cx="12" cy="12" r="4" fill="#3f9a3f" /><path d="m10 12 1.500 1.500L14 10.500" fill="none" stroke="#fff" strokeWidth="1.200" />
          </svg>
          <svg viewBox="0 0 16 16" className="size-4" fill="none" stroke="#fff" strokeWidth="1.300" aria-hidden="true">
            <path d="M8.500 3h5.500v12H8.500zM10 1.500h2.500M1.500 4.500h5v3h-5zM2.500 1.500v3M5.500 1.500v3M4 7.500V15" />
          </svg>
          <svg viewBox="0 0 16 16" className="size-4" fill="#fff" aria-hidden="true">
            <path d="M1 12h2v2H1zM4 10h2v4H4zM7 7h2v7H7zM10 5h2v9h-2zM13 2h2v12h-2z" />
          </svg>
          <svg viewBox="0 0 16 16" className="size-4" fill="none" stroke="#fff" aria-hidden="true">
            <path d="M1.500 5.500h2L7 2v12l-3.500-3.500h-2z" fill="#fff" /><path d="M9 6q1.500 2 0 4M11 4.500q3 3.500 0 7M13 3q4 5 0 10" strokeWidth="1.100" />
          </svg>
          <span className="ml-2 text-[12px]">ITA</span>
          <div className="ml-3 text-center text-[11px] leading-4">
            <div>16:26</div>
            <div>19/12/2014</div>
          </div>
        </div>
      </div>
    </footer>
  );
}

export default function App() {
  return (
    <div className={`flex h-screen flex-col overflow-hidden bg-[#e5e5e5] ${chromeFont}`}>
      <TabStrip />
      <AddressBar />
      <BookmarksBar />
      <div className={`flex min-h-0 flex-1 flex-col ${appFont}`}>
        <MenuBar />
        <Toolbar />
        <AppTabs />
        <main className="flex min-h-0 flex-1 gap-[7px] px-[5px] pb-1.5 pt-2.5">
          <TreePanel />
          <div className="flex min-w-0 flex-1 overflow-hidden rounded-[6px] bg-white">
            <div className="flex min-w-0 flex-1 flex-col gap-[13px] overflow-hidden">
              <Section title="Impostazione Generale: id_cliente" rows={general} valueWidth="w-[31.500%]" />
              <Section title="Formato del Valore" rows={formato} valueWidth="w-[38.200%]" />
            </div>
            <VScroll thumb="h-[95px]" />
          </div>
        </main>
      </div>
      <Taskbar />
    </div>
  );
}
